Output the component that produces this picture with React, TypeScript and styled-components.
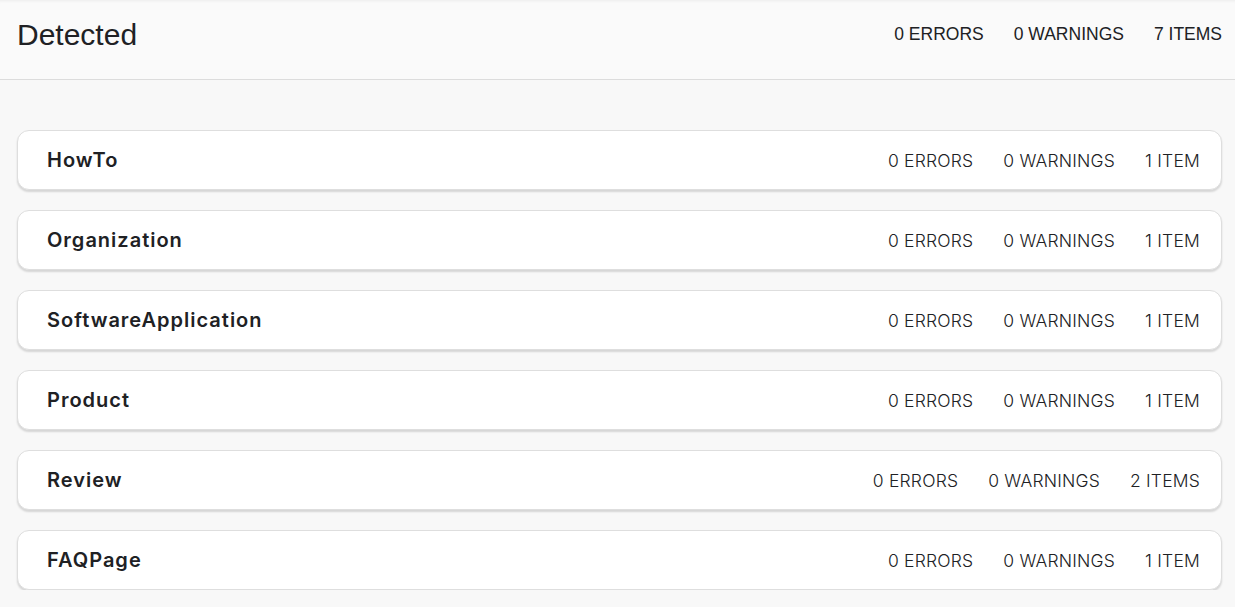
import React from 'react';
import styled, { createGlobalStyle } from 'styled-components';

const GlobalStyle = createGlobalStyle`
    body {
        margin: 0;
        background: #f8f8f8;
        font-family: 'Liberation Sans', Arial, sans-serif;
    }
`;

const Header = styled.header`
    height: 69px;
    display: flex;
    align-items: center;
    justify-content: space-between;
    padding: 0 13px 10px 17px;
    background: #fafafa;
    border-bottom: 1px solid #dcdcdc;
    box-shadow: inset 0 3px 3px -2px rgba(0, 0, 0, 0.06);
`;

const Title = styled.h1`
    margin: 0;
    font-family: 'Liberation Sans', Arial, sans-serif;
    font-size: 30px;
    font-weight: 400;
    color: #202124;
`;

const Stats = styled.div<{ $card?: boolean }>`
    display: flex;
    gap: 30px;
    font-family: ${(p) => (p.$card ? "Inter, 'Noto Sans', sans-serif" : "'Liberation Sans', Arial, sans-serif")};
    font-size: 17.5px;
    font-weight: ${(p) => (p.$card ? 300 : 400)};
    letter-spacing: ${(p) => (p.$card ? '0.2px' : '0')};
    color: #202124;
`;

const List = styled.main`
    display: flex;
    flex-direction: column;
    gap: 20px;
    padding: 50px 13px 0 17px;
`;

const Card = styled.div`
    height: 58px;
    display: flex;
    align-items: center;
    justify-content: space-between;
    padding: 0 21px 0 29px;
    background: #fff;
    border: 1px solid #dedede;
    border-radius: 12px;
    box-shadow: 0 2px 2px rgba(0, 0, 0, 0.14);
`;

const CardTitle = styled.span`
    font-family: Inter, 'Noto Sans', sans-serif;
    font-size: 20px;
    font-weight: 600;
    letter-spacing: 1px;
    color: #202124;
`;

const types = [
    { name: 'HowTo', items: 1 },
    { name: 'Organization', items: 1 },
    { name: 'SoftwareApplication', items: 1 },
    { name: 'Product', items: 1 },
    { name: 'Review', items: 2 },
    { name: 'FAQPage', items: 1 },
];

const itemLabel = (n: number) => `${n} ${n === 1 ? 'ITEM' : 'ITEMS'}`;

export default function App() {
    return (
        <>
            <GlobalStyle />
            <Header>
                <Title>Detected</Title>
                <Stats>
                    <span>0 ERRORS</span>
                    <span>0 WARNINGS</span>
                    <span>7 ITEMS</span>
                </Stats>
            </Header>
            <List>
                {types.map((t) => (
                    <Card key={t.name}>
                        <CardTitle>{t.name}</CardTitle>
                        <Stats $card>
                            <span>0 ERRORS</span>
                            <span>0 WARNINGS</span>
                            <span>{itemLabel(t.items)}</span>
                        </Stats>
                    </Card>
                ))}
            </List>
        </>
    );
}
